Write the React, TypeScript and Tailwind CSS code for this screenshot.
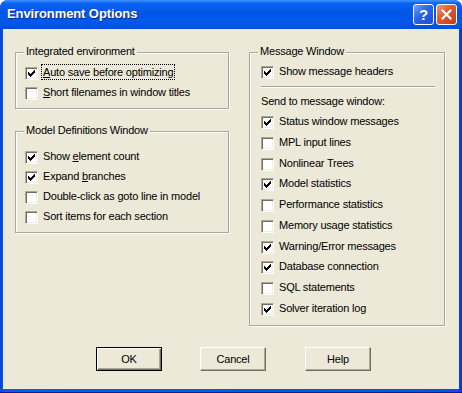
import type { ReactNode } from "react";

type Item = { label: ReactNode; checked: boolean; focused?: boolean };

const integrated: Item[] = [
  {
    label: (
      <>
        <u>A</u>uto save before optimizing
      </>
    ),
    checked: true,
    focused: true,
  },
  {
    label: (
      <>
        <u>S</u>hort filenames in window titles
      </>
    ),
    checked: false,
  },
];

const modelDefs: Item[] = [
  {
    label: (
      <>
        Show <u>e</u>lement count
      </>
    ),
    checked: true,
  },
  {
    label: (
      <>
        Expand <u>b</u>ranches
      </>
    ),
    checked: true,
  },
  { label: "Double-click as goto line in model", checked: false },
  { label: "Sort items for each section", checked: false },
];

const sendTo: Item[] = [
  { label: "Status window messages", checked: true },
  { label: "MPL input lines", checked: false },
  { label: "Nonlinear Trees", checked: false },
  { label: "Model statistics", checked: true },
  { label: "Performance statistics", checked: false },
  { label: "Memory usage statistics", checked: false },
  { label: "Warning/Error messages", checked: true },
  { label: "Database connection", checked: true },
  { label: "SQL statements", checked: false },
  { label: "Solver iteration log", checked: true },
];

function CheckBox({ checked }: { checked: boolean }) {
  return (
    <span className="relative mt-[3px] block w-[13px] h-[13px] shrink-0 bg-white border border-t-[#aca899] border-l-[#aca899] border-b-white border-r-white shadow-[inset_1px_1px_0_#716f64,inset_-1px_-1px_0_#f1efe2]">
      {checked && (
        <svg
          width="7"
          height="7"
          viewBox="0 0 7 7"
          shapeRendering="crispEdges"
          className="absolute left-[2px] top-[2px]"
        >
          <path
            fill="#000"
            d="M6 0h1v1h-1z M5 1h2v1h-2z M0 2h1v1h-1z M4 2h3v1h-3z M0 3h2v1h-2z M3 3h3v1h-3z M0 4h5v1h-5z M1 5h3v1h-3z M2 6h1v1h-1z"
          />
        </svg>
      )}
    </span>
  );
}

function Row({ item, height }: { item: Item; height: string }) {
  return (
    <div className={`flex items-start ${height}`}>
      <CheckBox checked={item.checked} />
      <span
        className={`ml-[3px] px-[1px] leading-[14px] border ${
          item.focused ? "border-dotted border-black" : "border-transparent"
        }`}
      >
        {item.label}
      </span>
    </div>
  );
}

function Group({
  label,
  className,
  children,
}: {
  label: string;
  className: string;
  children: ReactNode;
}) {
  return (
    <div
      className={`relative border border-[#aca899] shadow-[inset_1px_1px_0_#fff,1px_1px_0_#fff] ${className}`}
    >
      <span className="absolute -top-[8px] left-[8px] px-[2px] bg-[#ece9d8] leading-[13px]">
        {label}
      </span>
      {children}
    </div>
  );
}

export default function App() {
  return (
    <div className="w-[462px] h-[393px] flex flex-col rounded-t-[8px] overflow-hidden bg-[linear-gradient(to_right,#0042d8,#0a5cf0_1%,#0553e8_99%,#003bc8)] border-b border-[#001a99] font-['Liberation_Sans',Arial,sans-serif] text-[11px] tracking-[-0.2px] text-black">
      {/* Title bar */}
      <div className="h-[29px] shrink-0 flex items-center pl-[7px] pr-[5px] bg-[linear-gradient(to_bottom,#3d95ff_0%,#0a62f4_12%,#0056e6_45%,#0058ea_80%,#004bdc_100%)]">
        <span className="flex-1 pb-[1px] text-[13px] font-bold tracking-[-0.1px] text-white [text-shadow:1px_1px_0_#0c2a8f]">
          Environment Options
        </span>
        <div className="flex gap-[2px]">
          <div className="w-[21px] h-[21px] rounded-[3px] border border-white bg-[linear-gradient(135deg,#6da0ff,#2a63e6_45%,#1a4fd6)] flex items-center justify-center text-white text-[15px] font-bold leading-none">
            ?
          </div>
          <div className="w-[21px] h-[21px] rounded-[3px] border border-white bg-[linear-gradient(135deg,#f09a7c,#e0572f_45%,#c43c16)] flex items-center justify-center">
            <svg width="11" height="11" viewBox="0 0 11 11">
              <path
                d="M1.5 1.5 L9.5 9.5 M9.5 1.5 L1.5 9.5"
                stroke="#fff"
                strokeWidth="2.2"
                strokeLinecap="square"
              />
            </svg>
          </div>
        </div>
      </div>

      {/* Body */}
      <div className="flex-1 mx-[3px] mb-[3px] bg-[#ece9d8] pt-[23px] pl-[12px]">
        <div className="flex items-start gap-[20px]">
          <div className="w-[214px] flex flex-col gap-[22px]">
            <Group label="Integrated environment" className="h-[57px] pt-[11px] pl-[9px]">
              {integrated.map((item, i) => (
                <Row key={i} item={item} height="h-[20px]" />
              ))}
            </Group>
            <Group label="Model Definitions Window" className="h-[102px] pt-[16px] pl-[9px]">
              {modelDefs.map((item, i) => (
                <Row key={i} item={item} height="h-[20px]" />
              ))}
            </Group>
          </div>

          <Group label="Message Window" className="w-[196px] h-[274px] pt-[10px] pl-[11px] pr-[9px]">
            <Row
              item={{ label: "Show message headers", checked: true }}
              height="h-[20px]"
            />
            <div className="mt-[3px] h-[2px] border-t border-[#aca899] border-b border-b-white" />
            <div className="mt-[7px] leading-[13px]">Send to message window:</div>
            <div className="mt-[5px]">
              {sendTo.map((item, i) => (
                <Row key={i} item={item} height="h-[20.75px]" />
              ))}
            </div>
          </Group>
        </div>

        {/* Buttons */}
        <div className="flex mt-[21px] pl-[81px]">
          <button className="w-[66px] h-[24px] bg-[#ece9d8] border border-black shadow-[inset_1px_1px_0_#fff,inset_-1px_-1px_0_#716f64,inset_-2px_-2px_0_#aca899] leading-none">
            OK
          </button>
          <button className="ml-[38px] w-[66px] h-[24px] bg-[#ece9d8] border border-t-white border-l-white border-b-[#716f64] border-r-[#716f64] shadow-[inset_-1px_-1px_0_#aca899] leading-none">
            Cancel
          </button>
          <button className="ml-[39px] w-[66px] h-[24px] bg-[#ece9d8] border border-t-white border-l-white border-b-[#716f64] border-r-[#716f64] shadow-[inset_-1px_-1px_0_#aca899] leading-none">
            Help
          </button>
        </div>
      </div>
    </div>
  );
}
